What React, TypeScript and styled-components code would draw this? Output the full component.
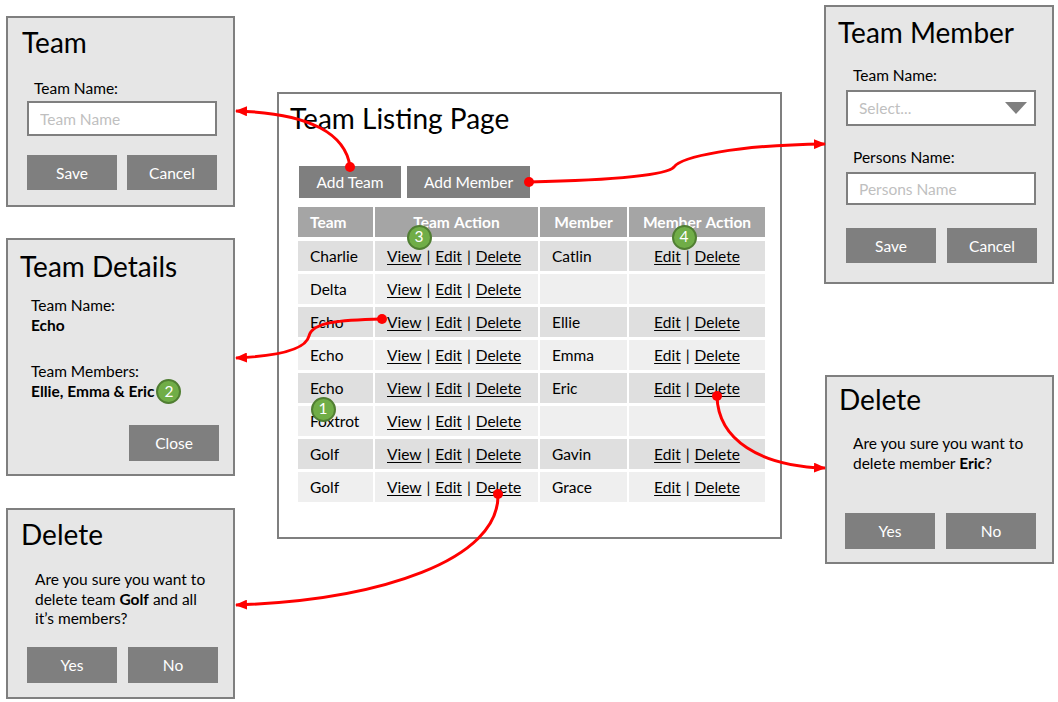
import React from "react";
import styled, { createGlobalStyle } from "styled-components";

const Global = createGlobalStyle`
  html, body { margin: 0; padding: 0; background: #ffffff; }
  body { font-family: Lato, "Noto Sans", "Liberation Sans", sans-serif; }
  *, *::before, *::after { box-sizing: border-box; }
`;

const Canvas = styled.div`
  position: relative;
  width: 1058px;
  height: 702px;
  overflow: hidden;
  background: #ffffff;
  color: #000000;
  font-family: Lato, "Noto Sans", "Liberation Sans", sans-serif;
`;

const Window = styled.section<{ $x: number; $y: number; $w: number; $h: number; $pt: number; $page?: boolean }>`
  position: absolute;
  left: ${(p) => p.$x}px;
  top: ${(p) => p.$y}px;
  width: ${(p) => p.$w}px;
  height: ${(p) => p.$h}px;
  border: 2px solid #7f7f7f;
  background: ${(p) => (p.$page ? "#ffffff" : "#e6e6e6")};
  padding-top: ${(p) => p.$pt}px;
  display: flex;
  flex-direction: column;
  align-items: flex-start;
`;

const Title = styled.h1<{ $indent: number; $size?: number }>`
  margin: 0 0 0 ${(p) => p.$indent}px;
  font-size: ${(p) => p.$size ?? 28}px;
  line-height: 32px;
  font-weight: 400;
  white-space: nowrap;
`;

const Label = styled.div<{ $indent: number; $top: number }>`
  margin: ${(p) => p.$top}px 0 0 ${(p) => p.$indent}px;
  font-size: 15.5px;
  line-height: 18px;
`;

const Field = styled.input<{ $indent: number; $top: number; $h: number }>`
  margin: ${(p) => p.$top}px 0 0 ${(p) => p.$indent}px;
  width: 190px;
  height: ${(p) => p.$h}px;
  border: 2px solid #7f7f7f;
  background: #ffffff;
  padding: 0 0 0 11px;
  font-family: inherit;
  font-size: 15.5px;
  outline: none;
  &::placeholder { color: #bfbfbf; }
`;

const Select = styled.div<{ $indent: number; $top: number }>`
  margin: ${(p) => p.$top}px 0 0 ${(p) => p.$indent}px;
  width: 190px;
  height: 36px;
  border: 2px solid #7f7f7f;
  background: #ffffff;
  padding: 0 7px 0 11px;
  display: flex;
  align-items: center;
  justify-content: space-between;
  font-size: 15.5px;
  color: #bfbfbf;
`;

const ButtonRow = styled.div<{ $indent: number; $top: number; $gap?: number }>`
  margin: ${(p) => p.$top}px 0 0 ${(p) => p.$indent}px;
  display: flex;
  gap: ${(p) => p.$gap ?? 10}px;
`;

const Button = styled.button<{ $w?: number; $h?: number }>`
  width: ${(p) => p.$w ?? 90}px;
  height: ${(p) => p.$h ?? 35}px;
  border: none;
  background: #7f7f7f;
  color: #ffffff;
  font-family: inherit;
  font-size: 15.5px;
  padding: 0;
`;

const CloseButton = styled(Button)`
  margin: auto 14px 13px 0;
  align-self: flex-end;
`;

const Details = styled.div`
  margin: 14px 0 0 23px;
  font-size: 15.5px;
  line-height: 19.5px;
`;

const Line = styled.div<{ $gap?: number }>`
  margin-top: ${(p) => p.$gap ?? 0}px;
  height: 19.5px;
  white-space: nowrap;
  display: flex;
  align-items: center;
`;

const Strong = styled.b`
  font-weight: 700;
`;

const Message = styled.p<{ $indent: number; $top: number }>`
  margin: ${(p) => p.$top}px 0 0 ${(p) => p.$indent}px;
  font-size: 15.5px;
  line-height: 19.7px;
`;

const Badge = styled.span`
  width: 25px;
  height: 25px;
  border-radius: 50%;
  background: #70ad47;
  border: 2px solid #507e32;
  color: #ffffff;
  font-size: 15.5px;
  line-height: 1;
  display: inline-flex;
  align-items: center;
  justify-content: center;
  flex: none;
`;

const InlineBadge = styled(Badge)`
  margin-left: 2px;
`;

const PinBadge = styled(Badge)<{ $x: number; $y: number }>`
  position: absolute;
  left: ${(p) => p.$x - 12.5}px;
  top: ${(p) => p.$y - 12.5}px;
`;

const Table = styled.div`
  margin: 9px 0 0 19px;
  display: flex;
  flex-direction: column;
  gap: 3px;
`;

const Row = styled.div<{ $head?: boolean }>`
  display: grid;
  grid-template-columns: 75px 163px 87px 136px;
  column-gap: 2px;
  height: 30px;
  margin-bottom: ${(p) => (p.$head ? 1 : 0)}px;
`;

const Cell = styled.div<{ $tone: "head" | "dark" | "light"; $center?: boolean }>`
  background: ${(p) => (p.$tone === "head" ? "#a5a5a5" : p.$tone === "dark" ? "#dfdfdf" : "#efefef")};
  color: ${(p) => (p.$tone === "head" ? "#ffffff" : "#000000")};
  font-weight: ${(p) => (p.$tone === "head" ? 700 : 400)};
  font-size: 15.5px;
  word-spacing: 1px;
  display: flex;
  align-items: center;
  justify-content: ${(p) => (p.$center ? "center" : "flex-start")};
  padding: 0 ${(p) => (p.$center ? 0 : 12)}px;
  white-space: pre;
`;

const Link = styled.span`
  text-decoration: underline;
  text-underline-offset: 2px;
`;

const Overlay = styled.svg`
  position: absolute;
  left: 0;
  top: 0;
  pointer-events: none;
`;

type Rec = { team: string; member: string };
const rows: Rec[] = [
  { team: "Charlie", member: "Catlin" },
  { team: "Delta", member: "" },
  { team: "Echo", member: "Ellie" },
  { team: "Echo", member: "Emma" },
  { team: "Echo", member: "Eric" },
  { team: "Foxtrot", member: "" },
  { team: "Golf", member: "Gavin" },
  { team: "Golf", member: "Grace" },
];

const arrows = [
  { d: "M350,167 C346,135 312,113 236,111", dot: [350, 167] },
  { d: "M529,182 C615,180 667,175 674,167 C681,157 735,145 825,144", dot: [529, 182] },
  { d: "M382,319 C340,320 312,322 309,336 C306,349 280,356 236,358", dot: [382, 319] },
  { d: "M717,396 C718,440 760,466 825,468", dot: [717, 396] },
  { d: "M498,494 C500,560 380,600 236,605", dot: [498, 494] },
];

export default function App() {
  return (
    <Canvas>
      <Global />

      <Window $x={6} $y={16} $w={229} $h={191} $pt={8}>
        <Title $indent={14}>Team</Title>
        <Label $indent={26} $top={21}>Team Name:</Label>
        <Field $indent={19} $top={4} $h={35} placeholder="Team Name" readOnly />
        <ButtonRow $indent={19} $top={19}>
          <Button>Save</Button>
          <Button>Cancel</Button>
        </ButtonRow>
      </Window>

      <Window $x={6} $y={238} $w={229} $h={238} $pt={10}>
        <Title $indent={12}>Team Details</Title>
        <Details>
          <Line>Team Name:</Line>
          <Line><Strong>Echo</Strong></Line>
          <Line $gap={27}>Team Members:</Line>
          <Line>
            <Strong>Ellie, Emma &amp; Eric</Strong>
            <InlineBadge>2</InlineBadge>
          </Line>
        </Details>
        <CloseButton $h={36}>Close</CloseButton>
      </Window>

      <Window $x={6} $y={508} $w={229} $h={191} $pt={8}>
        <Title $indent={13}>Delete</Title>
        <Message $indent={27} $top={20}>
          Are you sure you want to
          <br />
          delete team <Strong>Golf</Strong> and all
          <br />
          it’s members?
        </Message>
        <ButtonRow $indent={19} $top={18} $gap={11}>
          <Button $h={36}>Yes</Button>
          <Button $h={36}>No</Button>
        </ButtonRow>
      </Window>

      <Window $x={277} $y={92} $w={505} $h={447} $pt={8} $page>
        <Title $indent={11} $size={28}>Team Listing Page</Title>
        <ButtonRow $indent={20} $top={32} $gap={6}>
          <Button $w={102} $h={32}>Add Team</Button>
          <Button $w={123} $h={32}>Add Member</Button>
        </ButtonRow>
        <Table>
          <Row $head>
            <Cell $tone="head">Team</Cell>
            <Cell $tone="head" $center>Team Action</Cell>
            <Cell $tone="head" $center>Member</Cell>
            <Cell $tone="head" $center>Member Action</Cell>
          </Row>
          {rows.map((r, i) => {
            const tone = i % 2 === 0 ? "dark" : "light";
            return (
              <Row key={i}>
                <Cell $tone={tone}>{r.team}</Cell>
                <Cell $tone={tone}>
                  <Link>View</Link>{" | "}<Link>Edit</Link>{" | "}<Link>Delete</Link>
                </Cell>
                <Cell $tone={tone}>{r.member}</Cell>
                <Cell $tone={tone} $center>
                  {r.member ? (
                    <>
                      <Link>Edit</Link>{" | "}<Link>Delete</Link>
                    </>
                  ) : null}
                </Cell>
              </Row>
            );
          })}
        </Table>
      </Window>

      <Window $x={824} $y={5} $w={230} $h={279} $pt={9}>
        <Title $indent={12}>Team Member</Title>
        <Label $indent={27} $top={18}>Team Name:</Label>
        <Select $indent={20} $top={6}>
          <span>Select...</span>
          <svg width="22" height="12" viewBox="0 0 22 12">
            <path d="M0 0 L22 0 L11 12 Z" fill="#7f7f7f" />
          </svg>
        </Select>
        <Label $indent={27} $top={22}>Persons Name:</Label>
        <Field $indent={20} $top={6} $h={33} placeholder="Persons Name" readOnly />
        <ButtonRow $indent={20} $top={23} $gap={11}>
          <Button>Save</Button>
          <Button>Cancel</Button>
        </ButtonRow>
      </Window>

      <Window $x={825} $y={375} $w={229} $h={189} $pt={6}>
        <Title $indent={12}>Delete</Title>
        <Message $indent={26} $top={19}>
          Are you sure you want to
          <br />
          delete member <Strong>Eric</Strong>?
        </Message>
        <ButtonRow $indent={18} $top={40} $gap={11}>
          <Button $h={36}>Yes</Button>
          <Button $h={36}>No</Button>
        </ButtonRow>
      </Window>

      <PinBadge $x={323} $y={409}>1</PinBadge>
      <PinBadge $x={419} $y={237}>3</PinBadge>
      <PinBadge $x={684} $y={237}>4</PinBadge>

      <Overlay width="1058" height="702" viewBox="0 0 1058 702">
        <defs>
          <marker id="head" markerUnits="userSpaceOnUse" markerWidth="12" markerHeight="10" refX="11" refY="5" orient="auto">
            <path d="M0,0 L12,5 L0,10 Z" fill="#ff0000" />
          </marker>
        </defs>
        {arrows.map((a, i) => (
          <g key={i}>
            <path d={a.d} fill="none" stroke="#ff0000" strokeWidth="3" markerEnd="url(#head)" />
            <circle cx={a.dot[0]} cy={a.dot[1]} r="5" fill="#ff0000" />
          </g>
        ))}
      </Overlay>
    </Canvas>
  );
}
